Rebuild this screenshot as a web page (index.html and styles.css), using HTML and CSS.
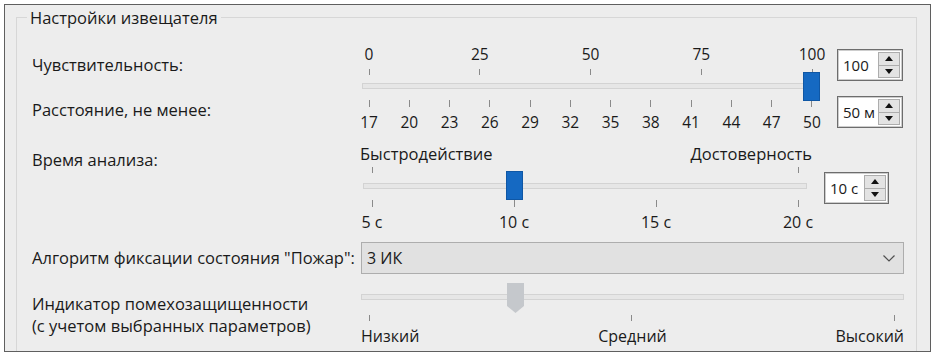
FILE: index.html
```html
<!DOCTYPE html>
<html lang="ru">
<head>
  <meta charset="UTF-8">
  <title>Настройки извещателя</title>
  <link rel="stylesheet" href="styles.css">
</head>
<body>
  <div class="window">
    <div class="group">
      <div class="group-title">Настройки извещателя</div>

      <div class="row row-dual">
        <div class="labels-col">
          <div class="lbl lbl-sens">Чувствительность:</div>
          <div class="lbl lbl-dist">Расстояние, не менее:</div>
        </div>
        <div class="scale scale-dual">
          <div class="marks">
            <span>0</span><span>25</span><span>50</span><span>75</span><span>100</span>
          </div>
          <div class="ticks ticks-top"><i></i><i></i><i></i><i></i><i></i></div>
          <div class="track">
            <div class="thumb" style="left: 440px"></div>
          </div>
          <div class="ticks ticks-bottom"><i></i><i></i><i></i><i></i><i></i><i></i><i></i><i></i><i></i><i></i><i></i><i></i></div>
          <div class="marks marks-bottom">
            <span>17</span><span>20</span><span>23</span><span>26</span><span>29</span><span>32</span><span>35</span><span>38</span><span>41</span><span>44</span><span>47</span><span>50</span>
          </div>
        </div>
        <div class="spins">
          <div class="spin spin-sens">
            <span class="spin-val">100</span>
            <div class="spin-btns"><span><b class="up"></b></span><span><b class="down"></b></span></div>
          </div>
          <div class="spin spin-dist">
            <span class="spin-val">50 м</span>
            <div class="spin-btns"><span><b class="up"></b></span><span><b class="down"></b></span></div>
          </div>
        </div>
      </div>

      <div class="row row-time">
        <div class="labels-col">
          <div class="lbl">Время анализа:</div>
        </div>
        <div class="scale scale-time">
          <div class="ends"><span>Быстродействие</span><span>Достоверность</span></div>
          <div class="ticks ticks-top"><i></i><i></i></div>
          <div class="track">
            <div class="thumb" style="left: 142px"></div>
          </div>
          <div class="ticks ticks-bottom"><i></i><i></i><i></i><i></i></div>
          <div class="marks marks-bottom">
            <span>5 с</span><span>10 с</span><span>15 с</span><span>20 с</span>
          </div>
        </div>
        <div class="spin spin-time">
          <span class="spin-val">10 с</span>
          <div class="spin-btns"><span><b class="up"></b></span><span><b class="down"></b></span></div>
        </div>
      </div>

      <div class="row row-combo">
        <div class="labels-col">
          <div class="lbl">Алгоритм фиксации состояния "Пожар":</div>
        </div>
        <div class="combo">
          <span>3 ИК</span>
          <svg class="chevron" width="12" height="7" viewBox="0 0 12 7">
            <polyline points="0.5,0.5 6,6 11.5,0.5" fill="none" stroke="#505050" stroke-width="1.2"/>
          </svg>
        </div>
      </div>

      <div class="row row-ind">
        <div class="labels-col">
          <div class="lbl lbl-ind">Индикатор помехозащищенности<br>(с учетом выбранных параметров)</div>
        </div>
        <div class="scale scale-ind">
          <div class="track">
            <svg class="thumb-ind" style="left: 145px" width="17" height="30" viewBox="0 0 17 30">
              <polygon points="0,0 17,0 17,23 8.5,30 0,23" fill="#c5c8cc"/>
            </svg>
          </div>
          <div class="ticks ticks-ind"><i></i><i></i><i></i></div>
          <div class="levels">
            <span class="lv-low">Низкий</span>
            <span class="lv-mid">Средний</span>
            <span class="lv-high">Высокий</span>
          </div>
        </div>
      </div>
    </div>
  </div>
</body>
</html>
```

FILE: styles.css
```css
* {
  margin: 0;
  padding: 0;
  box-sizing: border-box;
}
body {
  background-color: #ffffff;
  font-family: "Open Sans", "Noto Sans", sans-serif;
  font-size: 16px;
  color: #1a1a1a;
}
.window {
  margin: 4px 0 0 4px;
  width: 927px;
  height: 348px;
  border: 1px solid #5f5f5f;
  background-color: #ededed;
  overflow: hidden;
}
.group {
  margin: 12px 0 0 11px;
  width: 901px;
  height: 400px;
  border: 1px solid #d7d7d7;
}
.group-title {
  margin: -10px 0 0 10px;
  padding: 0 3px;
  width: max-content;
  font-size: 16.5px;
  line-height: 20px;
  background-color: #ededed;
}
.row {
  display: flex;
  padding-left: 15px;
}
.labels-col {
  width: 322px;
  flex-shrink: 0;
}
.lbl {
  font-size: 16.5px;
  line-height: 18px;
  white-space: nowrap;
}

/* scales */
.marks {
  display: flex;
  justify-content: space-between;
  height: 16px;
  font-size: 15.5px;
  line-height: 16px;
}
.marks span {
  width: 30px;
  display: flex;
  justify-content: center;
  white-space: nowrap;
}
.ticks {
  display: flex;
  justify-content: space-between;
}
.ticks i {
  width: 30px;
  height: 6px;
  background: linear-gradient(#8a8a8a, #8a8a8a) center / 1px 100% no-repeat;
}
.track {
  position: relative;
  height: 6px;
  border: 1px solid #d3d3d3;
  background-color: #e6e6e6;
}
.thumb {
  position: absolute;
  width: 17px;
  height: 29px;
  background-color: #1569c2;
  border: 1px solid #0f57a5;
}

/* sensitivity / distance */
.row-dual {
  margin-top: 18px;
}
.lbl-sens {
  margin-top: 10px;
}
.lbl-dist {
  margin-top: 27px;
}
.scale-dual {
  width: 473px;
}
.scale-dual .ticks-top {
  margin-top: 7px;
}
.scale-dual .track {
  margin: 8px 8px 0 8px;
}
.scale-dual .thumb {
  top: -12px;
}
.scale-dual .ticks-bottom {
  margin-top: 11px;
}
.scale-dual .ticks-bottom i {
  height: 7px;
}
.marks-bottom {
  margin-top: 7px;
}
.spins {
  margin-left: 10px;
}

/* spin boxes */
.spin {
  display: flex;
  align-items: center;
  width: 66px;
  height: 32px;
  padding: 2px 2px 2px 5px;
  background-color: #ffffff;
  border: 1px solid #6d6d6d;
  box-shadow: inset 0 0 0 1px #cdcdcd;
}
.spin-sens {
  margin-top: 3px;
}
.spin-dist {
  margin-top: 15px;
}
.spin-val {
  flex: 1;
  font-size: 15px;
  white-space: nowrap;
}
.spin-btns {
  display: flex;
  flex-direction: column;
  width: 22px;
  height: 100%;
  border: 1px solid #adadad;
  background-color: #e3e3e3;
}
.spin-btns span {
  flex: 1;
  display: flex;
  align-items: center;
  justify-content: center;
}
.spin-btns span + span {
  border-top: 1px solid #adadad;
}
.up {
  border-left: 4px solid transparent;
  border-right: 4px solid transparent;
  border-bottom: 5px solid #111111;
}
.down {
  border-left: 4px solid transparent;
  border-right: 4px solid transparent;
  border-top: 5px solid #111111;
}

/* analysis time */
.row-time {
  margin-top: 16px;
}
.row-time .lbl {
  margin-top: 5px;
}
.scale-time {
  width: 456px;
  margin-left: 3px;
}
.ends {
  display: flex;
  justify-content: space-between;
  height: 16px;
  font-size: 16.5px;
  line-height: 16px;
  padding: 0 1px 0 3px;
}
.scale-time .ticks-top {
  margin-top: 5px;
}
.scale-time .track {
  margin: 10px 6px 0 6px;
}
.scale-time .thumb {
  top: -13px;
}
.scale-time .ticks-bottom {
  margin-top: 11px;
}
.scale-time .ticks-bottom i {
  height: 7px;
}
.scale-time .marks {
  font-size: 16px;
}
.spin-time {
  width: 65px;
  margin: 26px 0 0 11px;
}

/* combo */
.row-combo {
  margin-top: 12px;
}
.row-combo .lbl {
  margin-top: 7px;
}
.combo {
  display: flex;
  align-items: center;
  justify-content: space-between;
  margin-left: 7px;
  width: 543px;
  height: 32px;
  padding: 0 8px 0 5px;
  font-size: 16px;
  background-color: #e1e1e1;
  border: 1px solid #adadad;
}

/* noise immunity indicator */
.row-ind {
  margin-top: 20px;
}
.lbl-ind {
  margin-top: -1px;
  line-height: 22px;
}
.scale-ind {
  margin-left: 7px;
  width: 543px;
}
.thumb-ind {
  position: absolute;
  top: -12px;
}
.ticks-ind {
  margin-top: 15px;
  padding-right: 2px;
}
.ticks-ind i {
  width: 16px;
}
.levels {
  display: grid;
  grid-template-columns: 1fr auto 1fr;
  margin-top: 7px;
  line-height: 16px;
}
.lv-high {
  justify-self: end;
}
```
